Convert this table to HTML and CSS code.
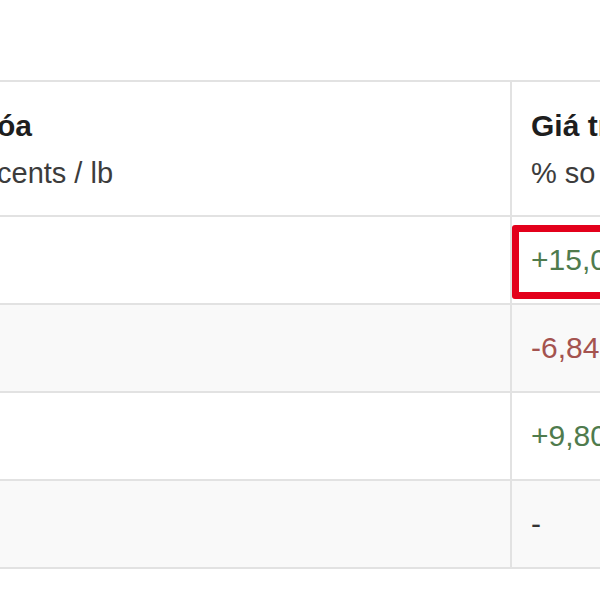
FILE: index.html
```html
<!DOCTYPE html>
<html lang="vi">
<head>
  <meta charset="UTF-8">
  <meta name="viewport" content="width=device-width, initial-scale=1.0">
  <title>Bảng giá hàng hóa</title>
  <link rel="stylesheet" href="styles.css">
</head>
<body>
  <main class="page">
    <div class="price-table">
      <div class="row row-head">
        <div class="cell cell-name">
          <div class="head-title">óa</div>
          <div class="head-sub">cents / lb</div>
        </div>
        <div class="cell cell-value">
          <div class="head-title">Giá trị</div>
          <div class="head-sub">% so với</div>
        </div>
      </div>
      <div class="row">
        <div class="cell cell-name"></div>
        <div class="cell cell-value marked">
          <span class="up">+15,05%</span>
          <span class="highlight"></span>
        </div>
      </div>
      <div class="row row-alt">
        <div class="cell cell-name"></div>
        <div class="cell cell-value"><span class="down">-6,84%</span></div>
      </div>
      <div class="row">
        <div class="cell cell-name"></div>
        <div class="cell cell-value"><span class="up">+9,80%</span></div>
      </div>
      <div class="row row-alt">
        <div class="cell cell-name"></div>
        <div class="cell cell-value"><span class="none">-</span></div>
      </div>
    </div>
  </main>
</body>
</html>
```
FILE: styles.css
```css
body {
  margin: 0;
  background-color: #ffffff;
  font-family: 'Liberation Sans', Arial, sans-serif;
}
.page {
  width: 600px;
  height: 600px;
  padding-top: 80px;
  box-sizing: border-box;
  overflow: hidden;
}
.price-table {
  width: 760px;
  border-top: 2px solid #e2e2e2;
}
.row {
  display: grid;
  grid-template-columns: 510px 1fr;
  height: 88px;
  box-sizing: border-box;
  border-bottom: 2px solid #e2e2e2;
}
.row-head {
  height: 135px;
  background-color: #ffffff;
}
.row-alt {
  background-color: #f9f9f9;
}
.cell-name {
  margin-left: -3px;
}
.cell-value {
  display: flex;
  align-items: center;
  padding-left: 19px;
  border-left: 2px solid #e2e2e2;
  font-size: 30px;
}
.row-head .cell {
  display: block;
  padding-top: 27px;
}
.row-head .cell-value {
  padding-left: 19px;
}
.head-title {
  font-size: 30px;
  line-height: 34px;
  font-weight: 700;
  color: #1e1e1e;
}
.head-sub {
  margin-top: 13px;
  font-size: 29px;
  line-height: 34px;
  color: #3c3c3c;
}
.up {
  color: #4f7b4d;
}
.down {
  color: #a4534f;
}
.none {
  color: #333333;
}
.marked {
  position: relative;
}
.highlight {
  position: absolute;
  top: 8px;
  bottom: 4px;
  left: 0;
  right: -40px;
  border: 7px solid #e3001b;
  border-radius: 3px;
  pointer-events: none;
}
```
